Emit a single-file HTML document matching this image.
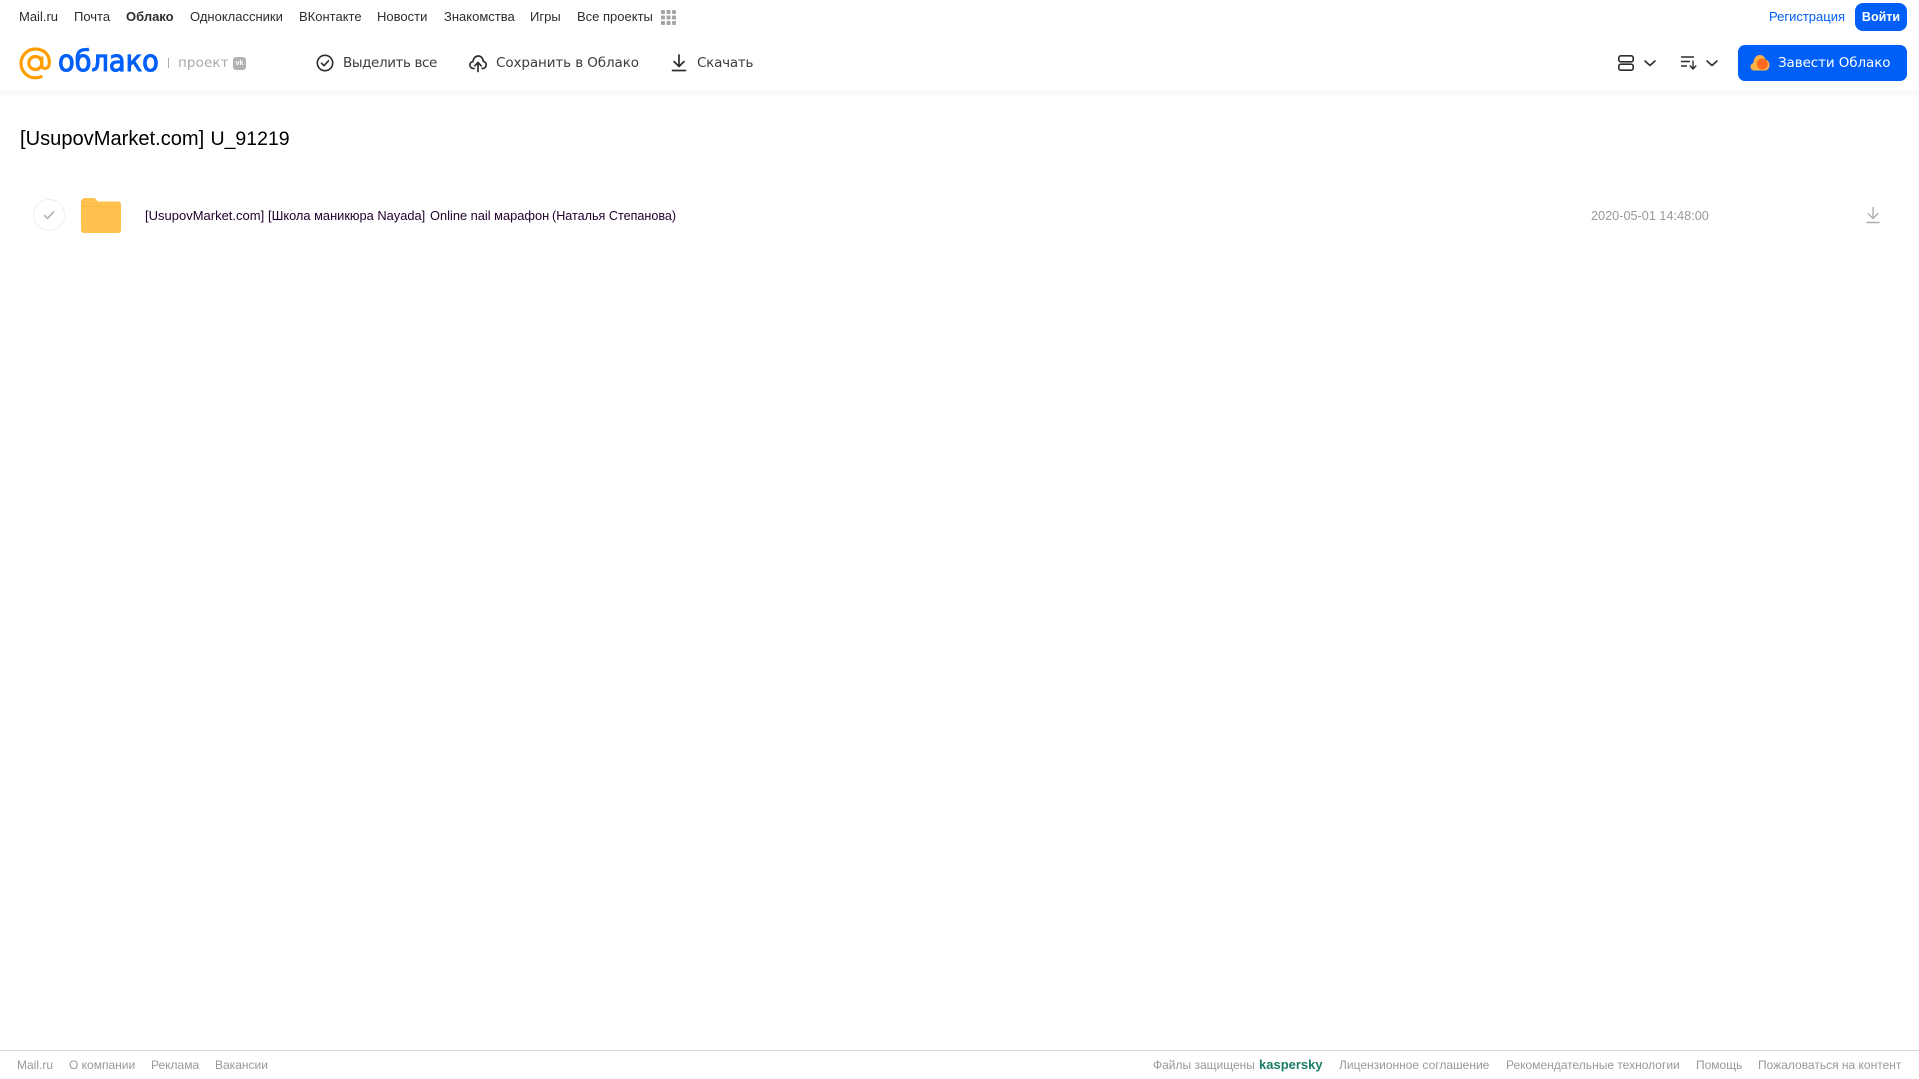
<!DOCTYPE html>
<html lang="ru"><head><meta charset="utf-8"><title>Облако</title>
<style>
html,body{margin:0;padding:0;background:#fff}
body{width:1919px;height:1079px;position:relative;overflow:hidden;font-family:"Liberation Sans",Arial,sans-serif}
.t{position:absolute;white-space:nowrap;line-height:16px}
.n{font-size:13px;color:#2c2d2e;top:9px}
.a{color:#3a3b3c;top:55px;font-family:"DejaVu Sans","Liberation Sans",sans-serif;font-size:13.5px;letter-spacing:-.1px}
.f{font-size:12px;color:#999;top:1057px}
.r{top:208px;color:#20002e;font-size:12.840px}
svg{position:absolute;overflow:visible}
</style></head><body>
<div style="position:absolute;left:0;top:0;width:1919px;height:91px;background:#fff;box-shadow:0 1px 8px rgba(0,0,0,.07)"></div>

<span class="t n" style="left:19px">Mail.ru</span>
<span class="t n" style="left:74px">Почта</span>
<span class="t n" style="left:126px;font-weight:bold">Облако</span>
<span class="t n" style="left:190px">Одноклассники</span>
<span class="t n" style="left:299px">ВКонтакте</span>
<span class="t n" style="left:377px">Новости</span>
<span class="t n" style="left:444px">Знакомства</span>
<span class="t n" style="left:530px">Игры</span>
<span class="t n" style="left:577px">Все проекты</span>
<svg style="left:661px;top:10px" width="15" height="15" fill="#a5a5a5"><rect width="4" height="4" rx="1"/><rect x="5.500" width="4" height="4" rx="1"/><rect x="11" width="4" height="4" rx="1"/><rect y="5.500" width="4" height="4" rx="1"/><rect x="5.500" y="5.500" width="4" height="4" rx="1"/><rect x="11" y="5.500" width="4" height="4" rx="1"/><rect y="11" width="4" height="4" rx="1"/><rect x="5.500" y="11" width="4" height="4" rx="1"/><rect x="11" y="11" width="4" height="4" rx="1"/></svg>

<span class="t" style="left:1769px;top:9px;font-size:13px;color:#005ff9">Регистрация</span>
<div style="position:absolute;left:1855px;top:3px;width:52px;height:28px;border-radius:8px;background:#005ff9"></div>
<span class="t" style="left:1855px;width:52px;text-align:center;top:9px;font-size:12.500px;color:#fff;font-weight:bold">Войти</span>

<!-- logo -->
<svg style="left:19px;top:47px" width="33" height="33" viewBox="0 0 33 33" fill="none" stroke="#ff9e00" stroke-width="3.200">
<circle cx="16.300" cy="16" r="6.500"/>
<path d="M22.800 9.500V18.500C22.800 22.500 29.800 23 30.300 16.500C31 7.500 24.500 2 16.300 2C8.500 2 2 8.500 2 16.300C2 24.500 8.500 30.800 16.300 30.800C19 30.800 21.200 30.200 23.300 29"/>
</svg>
<span class="t" style="left:58px;top:43px;line-height:36px;font-size:29px;color:#005ff9;font-family:'DejaVu Sans',sans-serif;-webkit-text-stroke:1.1px #005ff9;transform-origin:left center;transform:scaleX(.94)">облако</span>
<div style="position:absolute;left:168px;top:58px;width:1px;height:10px;background:#aaa"></div>
<span class="t" style="left:178px;top:55px;font-size:13.5px;color:#a8a8a8;font-family:'DejaVu Sans',sans-serif;letter-spacing:.1px">проект</span>
<div style="position:absolute;left:233px;top:57px;width:13px;height:13px;border-radius:3px;background:#b2b2b2"></div>
<span class="t" style="left:233px;width:13px;top:57px;line-height:13px;text-align:center;font-size:7px;font-weight:bold;color:#fff">vk</span>

<!-- actions -->
<svg style="left:316px;top:54px" width="18" height="18" fill="none" stroke="#2c2d2e" stroke-width="1.600"><circle cx="9" cy="9" r="7.700"/><path d="M5.500 9.200L8 11.700L12.500 6.800" stroke-linecap="round" stroke-linejoin="round"/></svg>
<span class="t a" style="left:343px;letter-spacing:-.4px">Выделить все</span>
<svg style="left:469px;top:54px" width="18" height="18" fill="none" stroke="#2c2d2e" stroke-width="1.700" stroke-linecap="round" stroke-linejoin="round"><path d="M5 14.500H4.500C2.300 14.500 .9 12.800 .9 11C.9 9.200 2.200 7.800 3.900 7.600C4.300 4.300 6.400 2 9.200 2C12 2 14 4.200 14.300 7.300C16 7.600 17.200 9.100 17.200 10.900C17.200 12.900 15.700 14.500 13.700 14.500H13"/><path d="M9 17.500V9M5.800 11.800L9 8.500L12.200 11.800"/></svg>
<span class="t a" style="left:496px">Сохранить в Облако</span>
<svg style="left:671px;top:54px" width="16" height="18" fill="none" stroke="#2c2d2e" stroke-width="1.700" stroke-linecap="round" stroke-linejoin="round"><path d="M8 1V12M3 7.500L8 12.500L13 7.500"/><path d="M1.500 16.500H14.500"/></svg>
<span class="t a" style="left:697px;letter-spacing:-.25px">Скачать</span>

<!-- view/sort -->
<svg style="left:1618px;top:55px" width="16" height="16" fill="none" stroke="#2c2d2e" stroke-width="1.600"><rect x=".8" y=".8" width="14.400" height="6" rx="2"/><rect x=".8" y="9.200" width="14.400" height="6" rx="2"/></svg>
<svg style="left:1644px;top:60px" width="12" height="7" fill="none" stroke="#2c2d2e" stroke-width="1.600" stroke-linecap="round" stroke-linejoin="round"><path d="M1 1L6 5.500L11 1"/></svg>
<svg style="left:1681px;top:56px" width="17" height="14" fill="none" stroke="#2c2d2e" stroke-width="1.400"><path d="M0 1H13M0 5.500H9M0 10H6"/><path d="M12 4.500V12.500M8.800 9.500L12 13L15.200 9.500" stroke-linejoin="round"/></svg>
<svg style="left:1706px;top:60px" width="12" height="7" fill="none" stroke="#2c2d2e" stroke-width="1.600" stroke-linecap="round" stroke-linejoin="round"><path d="M1 1L6 5.500L11 1"/></svg>

<div style="position:absolute;left:1738px;top:45px;width:169px;height:36px;border-radius:7px;background:#005ff9"></div>
<svg style="left:1750px;top:54px" width="20" height="18"><path d="M4.500 16.500C2 16.500 .5 14.800 .5 12.700C.5 10.800 1.800 9.400 3.500 9.100C3.500 4.500 6.300 1 9.800 1C12.800 1 14.700 3 15.500 5.500C18 6.200 19.500 8.500 19.500 11.200C19.500 14.300 17.500 16.500 14.500 16.500Z" fill="#ffb347"/><circle cx="12.300" cy="10" r="5.500" fill="#ff6a1f"/></svg>
<span class="t" style="left:1778px;top:55px;font-size:13.5px;color:#fff;font-family:'DejaVu Sans',sans-serif;letter-spacing:-.1px">Завести Облако</span>

<!-- title -->
<span class="t" style="left:20px;top:125px;line-height:28px;font-size:20.100px;color:#000">[UsupovMarket.com]</span>
<span class="t" style="left:210.500px;top:125px;line-height:28px;font-size:19.500px;color:#000">U_91219</span>

<!-- row -->
<svg style="left:33px;top:199px" width="32" height="32" fill="none"><circle cx="16" cy="16" r="15.500" stroke="#efefef"/><path d="M11.500 16.500L14.500 19.500L20.500 13" stroke="#aaa" stroke-width="1.500" stroke-linecap="round" stroke-linejoin="round"/></svg>
<svg style="left:81px;top:198px" width="40" height="35"><path d="M0 4C0 1.800 1.800 0 4 0H12C14 0 15.500 1 16.500 3.500H37C38.700 3.500 40 4.800 40 6.500V32C40 33.700 38.700 35 37 35H3C1.300 35 0 33.700 0 32Z" fill="#ffc14f"/><rect x="0" y="8" width="40" height="1" fill="#ffb73a"/></svg>
<span class="t r" style="left:145px;font-size:13px">[UsupovMarket.com]</span>
<span class="t r" style="left:268px">[Школа маникюра Nayada]</span>
<span class="t r" style="left:430px">Online nail марафон</span>
<span class="t r" style="left:552px;font-size:12.600px">(Наталья Степанова)</span>
<span class="t" style="left:1591px;top:208px;font-size:12.700px;color:#999">2020-05-01 14:48:00</span>
<svg style="left:1866px;top:206px" width="14" height="18" fill="none" stroke="#aaa" stroke-width="1.300"><path d="M7 1V12.500M2 7.500L7 12.500L12 7.500"/><path d="M.5 16.500H13.500" stroke-width="1.500"/></svg>

<!-- footer -->
<div style="position:absolute;left:0;top:1050px;width:1919px;height:1px;background:#d9d9d9"></div>
<span class="t f" style="left:17px">Mail.ru</span>
<span class="t f" style="left:69px">О компании</span>
<span class="t f" style="left:151px">Реклама</span>
<span class="t f" style="left:215px">Вакансии</span>
<span class="t f" style="left:1153px">Файлы защищены</span>
<span class="t" style="left:1259px;top:1057px;font-size:13px;font-weight:bold;color:#1d7c68">kaspersky</span>
<span class="t f" style="left:1339px">Лицензионное соглашение</span>
<span class="t f" style="left:1506px">Рекомендательные технологии</span>
<span class="t f" style="left:1696px">Помощь</span>
<span class="t f" style="left:1758px">Пожаловаться на контент</span>
</body></html>
